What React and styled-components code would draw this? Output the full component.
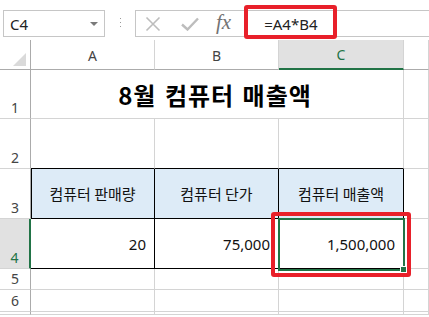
import React from 'react';
import styled, { createGlobalStyle } from 'styled-components';

const GlobalStyle = createGlobalStyle`
  html, body {
    margin: 0;
    padding: 0;
    background: #ffffff;
    overflow: hidden;
  }
  body {
    font-family: "Noto Sans", "Noto Sans CJK KR", sans-serif;
  }
`;

const Page = styled.div`
  width: 429px;
  height: 317px;
  overflow: hidden;
  background: #ffffff;
`;

const Toolbar = styled.div`
  display: flex;
  align-items: flex-start;
  height: 40px;
  padding-top: 10px;
  padding-left: 3px;
  box-sizing: border-box;
`;

const NameBox = styled.div`
  display: flex;
  align-items: center;
  justify-content: space-between;
  width: 102px;
  height: 27px;
  box-sizing: border-box;
  border: 1px solid #c6c6c6;
  padding: 0 6px 0 6px;
  font-size: 15px;
  color: #222;
`;

const DropArrow = styled.span`
  width: 0;
  height: 0;
  border-left: 4px solid transparent;
  border-right: 4px solid transparent;
  border-top: 4px solid #7a7a7a;
`;

const Dots = styled.div`
  display: flex;
  flex-direction: column;
  gap: 3px;
  margin: 8px 14px 0 15px;
  span {
    width: 1px;
    height: 1px;
    background: #9a9a9a;
  }
`;

const FormulaBox = styled.div`
  position: relative;
  display: flex;
  align-items: center;
  flex: 1;
  height: 27px;
  box-sizing: border-box;
  border: 1px solid #c6c6c6;
  border-right: none;
  padding-left: 9px;
`;

const IconSlot = styled.div`
  display: flex;
  align-items: center;
  justify-content: center;
  width: ${p => p.$w}px;
  margin-right: ${p => p.$gap}px;
`;

const Fx = styled.span`
  font-family: "Liberation Serif", "DejaVu Serif", serif;
  font-style: italic;
  font-size: 21px;
  color: #737373;
  line-height: 1;
  margin-top: -3px;
`;

const FormulaText = styled.span`
  font-size: 15px;
  color: #222;
  margin-left: 33px;
`;

const Callout = styled.div`
  position: absolute;
  left: ${p => p.$x}px;
  top: ${p => p.$y}px;
  width: ${p => p.$w}px;
  height: ${p => p.$h}px;
  box-sizing: border-box;
  border: 4px solid #e8202a;
  border-radius: 3px;
  pointer-events: none;
`;

const Sheet = styled.div`
  position: relative;
  display: grid;
  grid-template-columns: 31px 124px 124px 125px 1fr;
  grid-template-rows: 30px 49px 50px 50px 50px 21px 22px 1fr;
`;

const Corner = styled.div`
  position: relative;
  border-right: 1px solid #ababab;
  border-bottom: 1px solid #ababab;
  &::after {
    content: '';
    position: absolute;
    right: 4px;
    bottom: 3px;
    width: 0;
    height: 0;
    border-left: 13px solid transparent;
    border-bottom: 13px solid #dadada;
  }
`;

const ColHead = styled.div`
  display: flex;
  align-items: center;
  justify-content: center;
  font-size: 14px;
  padding-top: 1px;
  box-sizing: border-box;
  color: ${p => (p.$active ? '#217346' : '#444')};
  background: ${p => (p.$active ? '#e1e1e1' : '#ffffff')};
  border-right: 1px solid #d4d4d4;
  border-bottom: ${p => (p.$active ? '2px solid #217346' : '1px solid #ababab')};
`;

const RowHead = styled.div`
  display: flex;
  align-items: flex-end;
  justify-content: center;
  padding-bottom: 2px;
  box-sizing: border-box;
  font-size: 14px;
  line-height: 16px;
  color: ${p => (p.$active ? '#217346' : '#444')};
  background: ${p => (p.$active ? '#e1e1e1' : '#ffffff')};
  border-right: ${p => (p.$active ? '2px solid #217346' : '1px solid #ababab')};
  border-bottom: 1px solid #d4d4d4;
`;

const Cell = styled.div`
  display: flex;
  align-items: center;
  justify-content: ${p => p.$align || 'flex-start'};
  box-sizing: border-box;
  padding: 0 8px 0 4px;
  grid-column: ${p => p.$span || 'auto'};
  font-size: 15px;
  color: #111;
  background: ${p => (p.$head ? '#ddebf7' : '#ffffff')};
  border-right: 1px solid ${p => (p.$box ? '#000' : '#d4d4d4')};
  border-bottom: 1px solid ${p => (p.$boxBottom || p.$box ? '#000' : '#d4d4d4')};
  ${p => p.$boxLeft && 'box-shadow: inset 1px 0 0 #000;'}
`;

const Title = styled.span`
  font-family: "Noto Sans CJK KR", sans-serif;
  font-weight: 700;
  font-size: 24px;
  letter-spacing: 1px;
  word-spacing: 2px;
  color: #000;
  margin-top: 0px;
`;

const HeadText = styled.span`
  font-family: "Noto Sans CJK KR", sans-serif;
  font-size: 15px;
  color: #111;
  margin-left: 4px;
`;

const Selection = styled.div`
  position: absolute;
  left: 278px;
  top: 178px;
  width: 127px;
  height: 53px;
  box-sizing: border-box;
  border: 2px solid #217346;
  pointer-events: none;
  &::after {
    content: '';
    position: absolute;
    right: -4px;
    bottom: -4px;
    width: 5px;
    height: 5px;
    background: #217346;
    border: 1px solid #fff;
  }
`;

const CrossIcon = () => (
  <svg width="16" height="16" viewBox="0 0 16 16">
    <path d="M1.5 1.5 L14.5 14.5 M14.5 1.5 L1.5 14.5" stroke="#bdbdbd" strokeWidth="1.6" fill="none" />
  </svg>
);

const CheckIcon = () => (
  <svg width="18" height="14" viewBox="0 0 18 14">
    <path d="M1 7.5 L6.5 12.5 L17 1.5" stroke="#bdbdbd" strokeWidth="2.4" fill="none" />
  </svg>
);

export default function App() {
  const cols = ['A', 'B', 'C', ''];
  return (
    <Page>
      <GlobalStyle />
      <Toolbar>
        <NameBox>
          <span>C4</span>
          <DropArrow />
        </NameBox>
        <Dots>
          <span />
          <span />
          <span />
        </Dots>
        <FormulaBox>
          <IconSlot $w={16} $gap={20}><CrossIcon /></IconSlot>
          <IconSlot $w={18} $gap={17}><CheckIcon /></IconSlot>
          <Fx>fx</Fx>
          <FormulaText>=A4*B4</FormulaText>
          <Callout $x={108} $y={-6} $w={93} $h={34} />
        </FormulaBox>
      </Toolbar>
      <Sheet>
        <Corner />
        {cols.map((c, i) => (
          <ColHead key={i} $active={c === 'C'}>{c}</ColHead>
        ))}

        <RowHead>1</RowHead>
        <Cell $span="span 3" $align="center"><Title>8월 컴퓨터 매출액</Title></Cell>
        <Cell />

        <RowHead>2</RowHead>
        <Cell $boxBottom />
        <Cell $boxBottom />
        <Cell $boxBottom />
        <Cell />

        <RowHead>3</RowHead>
        <Cell $head $box $boxLeft $align="center"><HeadText>컴퓨터 판매량</HeadText></Cell>
        <Cell $head $box $align="center"><HeadText>컴퓨터 단가</HeadText></Cell>
        <Cell $head $box $align="center"><HeadText>컴퓨터 매출액</HeadText></Cell>
        <Cell />

        <RowHead $active>4</RowHead>
        <Cell $box $align="flex-end">20</Cell>
        <Cell $box $align="flex-end">75,000</Cell>
        <Cell $box $align="flex-end">1,500,000</Cell>
        <Cell />

        <RowHead>5</RowHead>
        <Cell /><Cell /><Cell /><Cell />

        <RowHead>6</RowHead>
        <Cell /><Cell /><Cell /><Cell />

        <RowHead />
        <Cell /><Cell /><Cell /><Cell />

        <Selection />
        <Callout $x={271} $y={172} $w={140} $h={65} />
      </Sheet>
    </Page>
  );
}
